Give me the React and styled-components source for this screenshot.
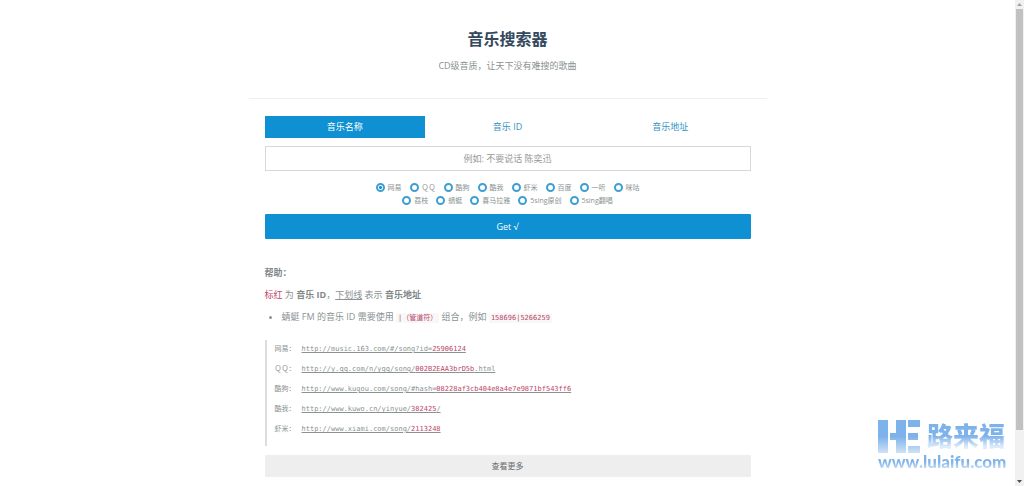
import React, { useState } from 'react';
import styled, { createGlobalStyle } from 'styled-components';

const sans = '"Open Sans", "Noto Sans CJK SC", sans-serif';
const mono = '"DejaVu Sans Mono", "Noto Sans CJK SC", monospace';

const GlobalStyle = createGlobalStyle`
  *, *::before, *::after { box-sizing: border-box; }
  body {
    margin: 0;
    background: #fff;
    color: #8a9292;
    font: 9px/14px ${sans};
    overflow: hidden;
  }
  h1, h2, p, ul { margin: 0; padding: 0; }
  button, input { font: inherit; margin: 0; }
`;

const Frame = styled.div`
  display: flex;
  height: 100vh;
`;

const Page = styled.main`
  flex: 1;
  overflow: hidden;
`;

const Column = styled.div`
  max-width: 518px;
  margin: 0 auto;
`;

const Header = styled.header`
  padding: 28px 0 25px;
  border-bottom: 1px solid #eee;
  text-align: center;
`;

const Title = styled.h1`
  margin-bottom: 9px;
  color: #34495e;
  font-size: 16px;
  line-height: 22px;
`;

const Body = styled.div`
  padding: 17px 16px 9px;
`;

const Tabs = styled.div`
  display: grid;
  grid-template-columns: repeat(3, 1fr);
  gap: 2px;
  margin-bottom: 8px;
`;

const Tab = styled.button`
  height: 22px;
  padding: 0;
  border: 0;
  background: ${(p) => (p.$active ? '#0e90d2' : 'transparent')};
  color: ${(p) => (p.$active ? '#fff' : '#3394bd')};
`;

const SearchInput = styled.input`
  display: block;
  width: 100%;
  height: 25px;
  margin-bottom: 10px;
  padding: 0 8px;
  border: 1px solid #d8d8d8;
  border-radius: 0;
  outline: 0;
  color: #555;
  text-align: center;
  &::placeholder { color: #999; opacity: 1; }
`;

const Sources = styled.div`
  display: flex;
  flex-wrap: wrap;
  justify-content: center;
  column-gap: 8px;
  max-width: 290px;
  margin: 0 auto 7px;
`;

const SourceLabel = styled.label`
  display: flex;
  align-items: center;
  gap: 3px;
  height: 13px;
  font-size: 7px;
  line-height: 13px;
`;

const Radio = styled.input`
  appearance: none;
  width: 9px;
  height: 9px;
  border: 2px solid #3d9fd2;
  border-radius: 50%;
  &:checked {
    background: radial-gradient(circle, #0e90d2 1px, #fff 2px);
  }
`;

const Submit = styled.button`
  display: block;
  width: 100%;
  height: 25px;
  margin-bottom: 27px;
  padding: 0;
  border: 0;
  border-radius: 1px;
  background: #0e90d2;
  color: #fff;
`;

const HelpTitle = styled.h2`
  margin-bottom: 8px;
  font-size: 9px;
  line-height: 14px;
  color: #7f8888;
`;

const HelpList = styled.ul`
  margin: 8px 0 16px;
  padding-left: 17px;
`;

const Strong = styled.strong`
  color: #7f8888;
`;

const Red = styled.span`
  color: #bb4667;
`;

const Code = styled.code`
  padding: 1px 2px;
  background: #f8f8f8;
  color: #bb4667;
  font: 7px/10px ${mono};
`;

const Examples = styled.blockquote`
  margin: 0 0 9px;
  padding: 2px 0 10px 8px;
  border-left: 2px solid #ddd;
`;

const Example = styled.p`
  display: flex;
  gap: 6px;
  height: 14px;
  font: 7px/14px ${mono};
  & + & { margin-top: 6px; }
`;

const ExampleLabel = styled.span`
  width: 21px;
`;

const Link = styled.a`
  color: inherit;
  text-decoration: underline;
`;

const More = styled.button`
  display: block;
  width: 100%;
  height: 22px;
  padding: 0;
  border: 0;
  border-radius: 1px;
  background: #eee;
  color: #6b6b70;
  font-size: 8px;
`;

const ScrollTrack = styled.div`
  display: flex;
  flex-direction: column;
  align-items: center;
  width: 9px;
  background: #f1f1f1;
`;

const ScrollThumb = styled.div`
  flex: 421;
  width: 7px;
  background: #c1c1c1;
`;

const ScrollRest = styled.div`
  flex: 47;
`;

const Arrow = styled.svg`
  width: 9px;
  height: 9px;
`;

const Watermark = styled.div`
  position: fixed;
  right: 18px;
  bottom: 15px;
  width: 128px;
`;

const WatermarkTop = styled.div`
  display: flex;
  align-items: center;
  gap: 6px;
  height: 34px;
`;

const Logo = styled.svg`
  width: 43px;
  height: 33px;
`;

const Fade = styled.span`
  background: linear-gradient(#7db2ea 50%, #dceafa 85%);
  background-clip: text;
  color: transparent;
  font-weight: 900;
  font-size: 26px;
  line-height: 30px;
`;

const Site = styled.div`
  background: linear-gradient(#7db2ea 50%, #c4dcf6 85%);
  background-clip: text;
  color: transparent;
  font: 900 17px/18px Lato, ${sans};
  text-align: center;
`;

const tabs = ['音乐名称', '音乐 ID', '音乐地址'];
const sources = ['网易', 'ＱＱ', '酷狗', '酷我', '虾米', '百度', '一听', '咪咕', '荔枝', '蜻蜓', '喜马拉雅', '5sing原创', '5sing翻唱'];
const examples = [
  ['网易：', 'http://music.163.com/#/song?id=', '25906124', ''],
  ['ＱＱ：', 'http://y.qq.com/n/yqq/song/', '002B2EAA3brD5b', '.html'],
  ['酷狗：', 'http://www.kugou.com/song/#hash=', '08228af3cb404e8a4e7e9871bf543ff6', ''],
  ['酷我：', 'http://www.kuwo.cn/yinyue/', '382425', '/'],
  ['虾米：', 'http://www.xiami.com/song/', '2113248', ''],
];

export default function App() {
  const [tab, setTab] = useState(0);
  const [source, setSource] = useState('网易');
  return (
    <Frame>
      <GlobalStyle />
      <Page>
        <Column>
          <Header>
            <Title>音乐搜索器</Title>
            <p>CD级音质，让天下没有难搜的歌曲</p>
          </Header>
          <Body>
            <Tabs>
              {tabs.map((name, i) => (
                <Tab key={name} type="button" $active={i === tab} onClick={() => setTab(i)}>{name}</Tab>
              ))}
            </Tabs>
            <SearchInput aria-label="音乐名称" placeholder="例如: 不要说话 陈奕迅" />
            <Sources>
              {sources.map((name) => (
                <SourceLabel key={name}>
                  <Radio type="radio" name="source" checked={name === source} onChange={() => setSource(name)} />
                  {name}
                </SourceLabel>
              ))}
            </Sources>
            <Submit type="button">Get √</Submit>
            <HelpTitle>帮助：</HelpTitle>
            <p>
              <Red>标红</Red> 为 <Strong>音乐 ID</Strong>，<u>下划线</u> 表示 <Strong>音乐地址</Strong>
            </p>
            <HelpList>
              <li>
                蜻蜓 FM 的音乐 ID 需要使用 <Code>|（管道符）</Code> 组合，例如 <Code>158696|5266259</Code>
              </li>
            </HelpList>
            <Examples>
              {examples.map(([label, before, id, after]) => (
                <Example key={label}>
                  <ExampleLabel>{label}</ExampleLabel>
                  <Link href={before + id + after}>{before}<Red>{id}</Red>{after}</Link>
                </Example>
              ))}
            </Examples>
            <More type="button">查看更多</More>
          </Body>
        </Column>
      </Page>
      <ScrollTrack aria-hidden="true">
        <Arrow viewBox="0 0 9 9"><path d="M2 6h5L4.500 3z" fill="#a3a3a3" /></Arrow>
        <ScrollThumb />
        <ScrollRest />
        <Arrow viewBox="0 0 9 9"><path d="M2 3h5L4.500 6z" fill="#505050" /></Arrow>
      </ScrollTrack>
      <Watermark>
        <WatermarkTop>
          <Logo viewBox="0 0 43 33" aria-hidden="true">
            <defs>
              <linearGradient id="fade" x1="0" y1="0" x2="0" y2="33" gradientUnits="userSpaceOnUse">
                <stop offset="0.5" stopColor="#7db2ea" />
                <stop offset="1" stopColor="#cfe2f7" />
              </linearGradient>
            </defs>
            <path fill="url(#fade)" d="M0 0h10v33H0zM18 0h10v33h-10V20h-6V13h6zM30 0h12v7H30zM30 13h10v7H30zM30 26h12v7H30z" />
          </Logo>
          <Fade>路来福</Fade>
        </WatermarkTop>
        <Site>www.lulaifu.com</Site>
      </Watermark>
    </Frame>
  );
}
